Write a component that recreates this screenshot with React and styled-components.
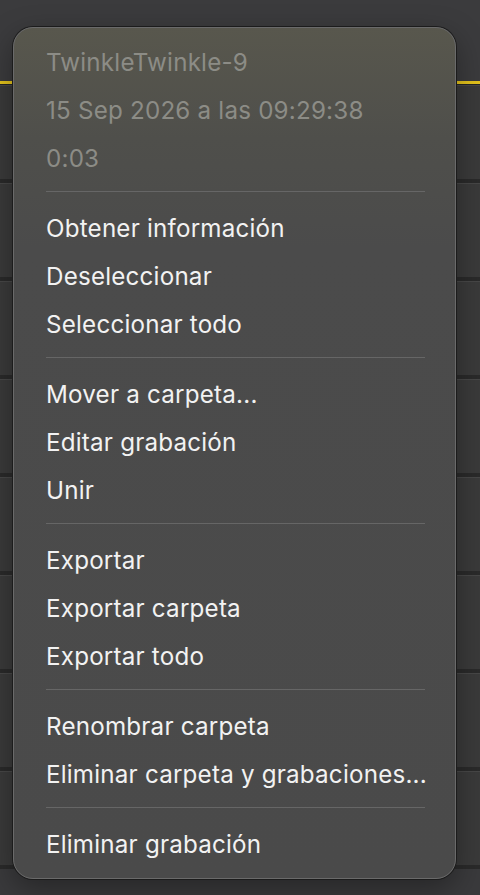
import React from 'react'
import styled, { createGlobalStyle } from 'styled-components'

// Context menu for a voice memo, shown over the recordings list.

const GlobalStyle = createGlobalStyle`
  html, body {
    margin: 0;
    padding: 0;
    background: #3a3a3c;
  }
  body {
    font-family: Inter, "Noto Sans", "Liberation Sans", sans-serif;
    -webkit-font-smoothing: antialiased;
  }
`

const sections = [
  { dim: true, items: ['TwinkleTwinkle-9', '15 Sep 2026 a las 09:29:38', '0:03'] },
  { items: ['Obtener información', 'Deseleccionar', 'Seleccionar todo'] },
  { items: ['Mover a carpeta...', 'Editar grabación', 'Unir'] },
  { items: ['Exportar', 'Exportar carpeta', 'Exportar todo'] },
  { items: ['Renombrar carpeta', 'Eliminar carpeta y grabaciones...'] },
  { items: ['Eliminar grabación'] },
]

function App() {
  return (
    <Screen>
      <GlobalStyle />
      <TopBar />
      <Accent />
      <List>
        {Array(8).fill().map((_, i) => <Row key={i} />)}
      </List>

      <Menu>
        {sections.map((section, i) => (
          <React.Fragment key={i}>
            {i > 0 && <Divider />}
            {section.items.map((label) => (
              <Item key={label} $dim={section.dim}>{label}</Item>
            ))}
          </React.Fragment>
        ))}
      </Menu>
    </Screen>
  )
}

export default App

const Screen = styled.div`
  position: relative;
  width: 480px;
  height: 895px;
  overflow: hidden;
  background: #3a3a3c;
`

const TopBar = styled.div`
  height: 81px;
  background: #3b3b3d;
`

const Accent = styled.div`
  height: 3px;
  background: #e3c21c;
  border-bottom: 1px solid #262626;
`

const List = styled.div`
  display: flex;
  flex-direction: column;
`

const Row = styled.div`
  height: 93px;
  background: #3a3a3a;
  border-top: 1px solid #474747;
  border-bottom: 4px solid #2a2a2a;
`

const Menu = styled.div`
  position: absolute;
  top: 27px;
  left: 13px;
  width: 443px;
  box-sizing: border-box;
  padding: 10px 0 10px;
  display: flex;
  flex-direction: column;
  border-radius: 20px;
  background: linear-gradient(180deg, #58574d 0px, #4f4f4b 110px, #4b4b4b 220px, #4a4a4a 100%);
  border: 1px solid #6a6a6a;
  box-shadow: 0 0 0 1px #1c1c1c, 0 10px 30px rgba(0, 0, 0, 0.35);
`

const Item = styled.div`
  height: 48px;
  display: flex;
  align-items: center;
  padding: 0 32px;
  font-size: 24.2px;
  letter-spacing: 0.2px;
  color: ${(p) => (p.$dim ? '#8c8c86' : '#f2f2f2')};
  white-space: nowrap;
`

const Divider = styled.div`
  height: 1px;
  margin: 9px 30px 12px 32px;
  background: #666666;
`
